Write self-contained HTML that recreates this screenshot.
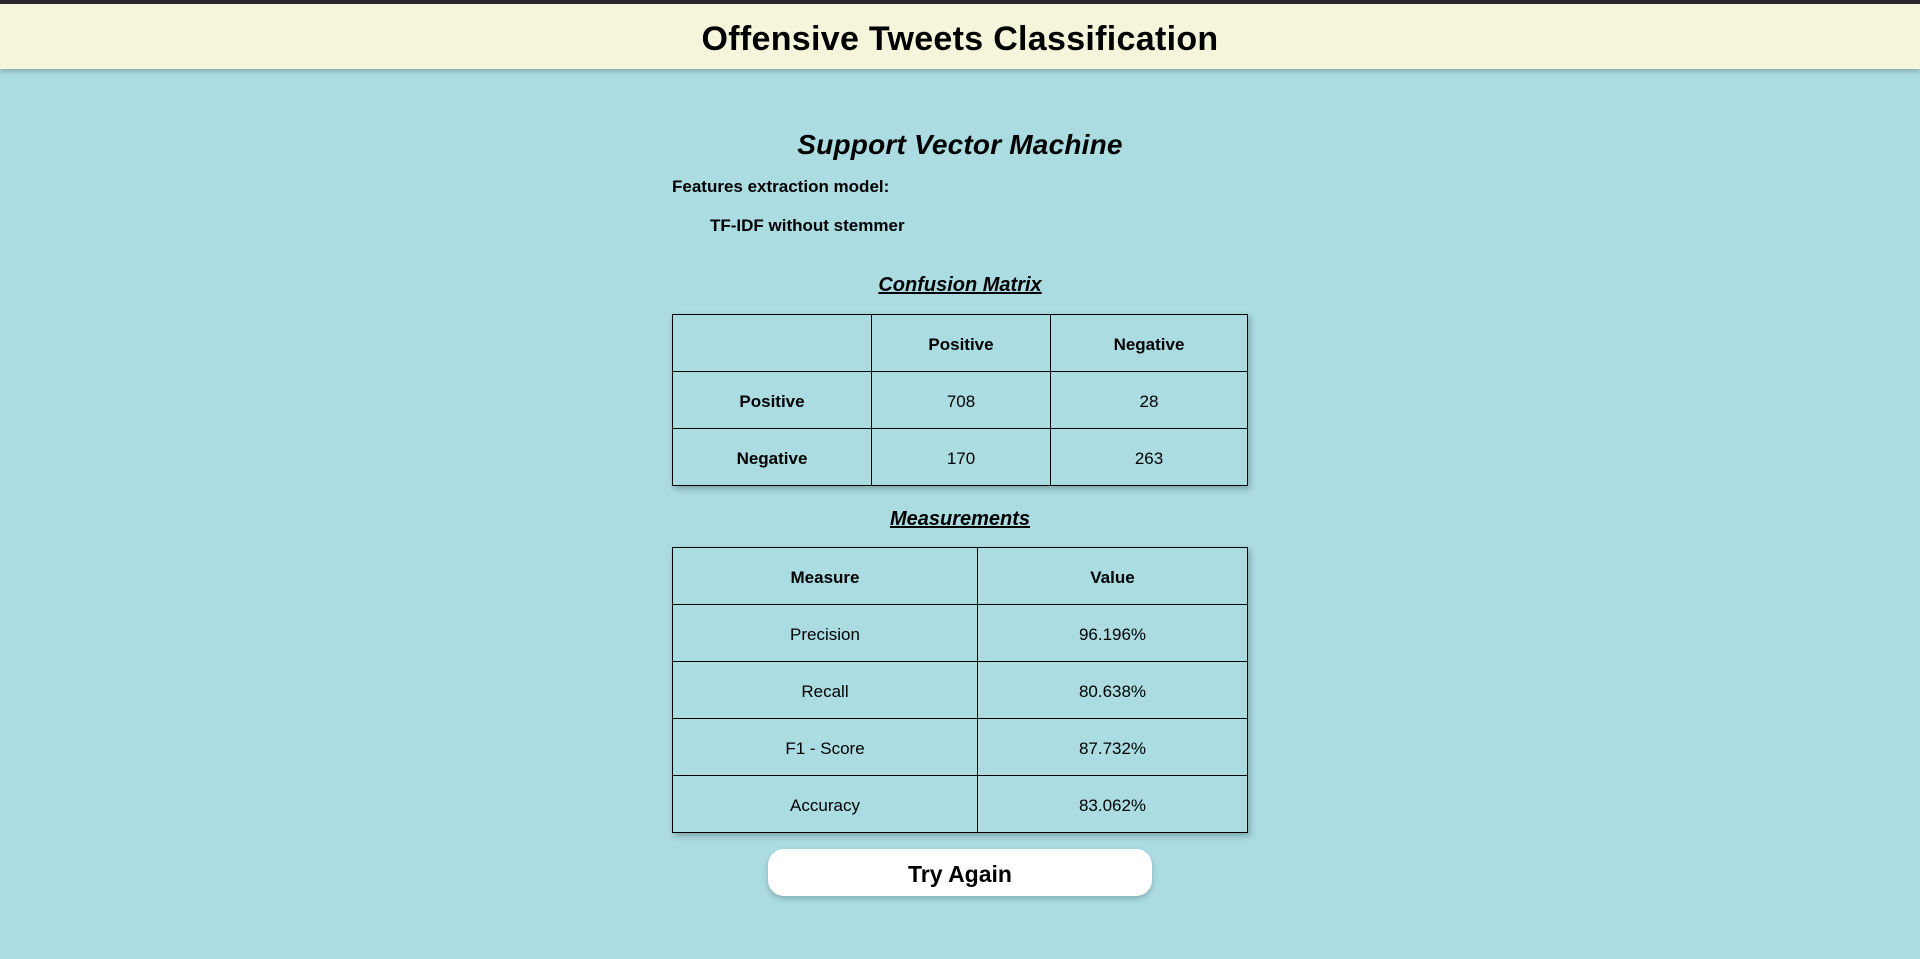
<!DOCTYPE html>
<html><head><meta charset="utf-8"><style>
html,body{margin:0;padding:0}
body{width:1920px;height:959px;background:#aadce2;font-family:"Comic Sans MS","Liberation Sans",sans-serif;color:#000;position:relative;overflow:hidden}
.top{position:absolute;left:0;top:0;width:1920px;height:4px;background:#2a2a2e}
.hdr{position:absolute;left:0;top:4px;width:1920px;height:65px;background:#f5f5dc;box-shadow:0 2px 5px rgba(0,0,0,.25);text-align:center;line-height:70px;font-weight:bold;font-size:34px;letter-spacing:0.3px}
.t{position:absolute;font-weight:bold;white-space:nowrap}
table{position:absolute;border-collapse:collapse;box-shadow:2px 3px 6px rgba(0,0,0,.25)}
td{border:1.5px solid #000;text-align:center;font-size:17px;padding:4px 0 0 0}
.b{font-weight:bold}
.btn{position:absolute;left:768px;top:849px;width:384px;height:47px;background:#fff;border-radius:16px;box-shadow:0 3px 6px rgba(0,0,0,.2);text-align:center;line-height:51px;font-weight:bold;font-size:23px}
</style></head><body>
<div class="top"></div>
<div class="hdr">Offensive Tweets Classification</div>
<div class="t" style="left:0;width:1920px;text-align:center;top:129px;font-size:28px;font-style:italic;letter-spacing:0.2px">Support Vector Machine</div>
<div class="t" style="left:672px;top:177px;font-size:17px">Features extraction model:</div>
<div class="t" style="left:710px;top:216px;font-size:17px">TF-IDF without stemmer</div>
<div class="t" style="left:0;width:1920px;text-align:center;top:274px;font-size:20px;font-style:italic;text-decoration:underline">Confusion Matrix</div>
<table style="left:672px;top:314px;width:576px">
<tr style="height:57px"><td style="width:198px"></td><td class="b" style="width:178px">Positive</td><td class="b">Negative</td></tr>
<tr style="height:57px"><td class="b">Positive</td><td>708</td><td>28</td></tr>
<tr style="height:57px"><td class="b">Negative</td><td>170</td><td>263</td></tr>
</table>
<div class="t" style="left:0;width:1920px;text-align:center;top:508px;font-size:20px;font-style:italic;text-decoration:underline">Measurements</div>
<table style="left:672px;top:547px;width:576px">
<tr style="height:57px"><td class="b" style="width:304px">Measure</td><td class="b">Value</td></tr>
<tr style="height:57px"><td>Precision</td><td>96.196%</td></tr>
<tr style="height:57px"><td>Recall</td><td>80.638%</td></tr>
<tr style="height:57px"><td>F1 - Score</td><td>87.732%</td></tr>
<tr style="height:57px"><td>Accuracy</td><td>83.062%</td></tr>
</table>
<div class="btn">Try Again</div>
</body></html>
